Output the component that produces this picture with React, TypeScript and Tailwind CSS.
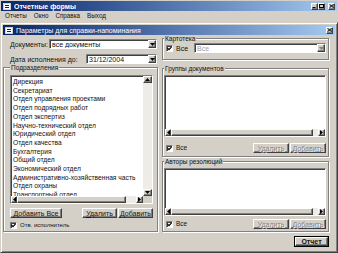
import React from "react";

const raised =
  "border border-t-white border-l-white border-b-[#404040] border-r-[#404040] shadow-[inset_-1px_-1px_0_#808080]";
const sunken =
  "border border-t-[#808080] border-l-[#808080] border-b-white border-r-white shadow-[inset_1px_1px_0_#404040]";
const etched = "border border-[#808080] shadow-[inset_1px_1px_0_#fff,1px_1px_0_#fff]";

const departments = [
  "Дирекция",
  "Секретариат",
  "Отдел управления проектами",
  "Отдел подрядных работ",
  "Отдел экспертиз",
  "Научно-технический отдел",
  "Юридический отдел",
  "Отдел качества",
  "Бухгалтерия",
  "Общий отдел",
  "Экономический отдел",
  "Административно-хозяйственная часть",
  "Отдел охраны",
  "Транспортный отдел",
];

type Dir = "up" | "down" | "left" | "right";

const Tri = ({ dir, color = "#000" }: { dir: Dir; color?: string }) => {
  const vertical = dir === "up" || dir === "down";
  const w = vertical ? 5 : 3;
  const h = vertical ? 3 : 5;
  const pts = {
    down: "0,0 5,0 2.5,3",
    up: "0,3 5,3 2.5,0",
    left: "3,0 3,5 0,2.5",
    right: "0,0 0,5 3,2.5",
  }[dir];
  return (
    <svg width={w} height={h} viewBox={`0 0 ${w} ${h}`}>
      <polygon points={pts} fill={color} />
    </svg>
  );
};

const ArrowBtn = ({ dir, className = "" }: { dir: Dir; className?: string }) => (
  <div className={`flex shrink-0 items-center justify-center bg-[#d4d0c8] ${raised} ${className}`}>
    <Tri dir={dir} />
  </div>
);

const Combo = ({ text, disabled, className = "" }: { text: string; disabled?: boolean; className?: string }) => (
  <div className={`flex h-[10px] items-center bg-white ${sunken} ${className}`}>
    <span className={`flex-1 truncate pl-[2px] ${disabled ? "text-[#a0a0a0]" : ""}`}>{text}</span>
    <div className={`flex h-full w-[8px] items-center justify-center bg-[#d4d0c8] ${raised}`}>
      <Tri dir="down" color={disabled ? "#808080" : "#000"} />
    </div>
  </div>
);

const Check = () => (
  <div className={`flex h-[7px] w-[7px] shrink-0 items-center justify-center bg-white ${sunken}`}>
    <svg width="5" height="5" viewBox="0 0 5 5">
      <path d="M0.6 2.2 L2 3.7 L4.6 0.8" stroke="#000" strokeWidth="1.2" fill="none" />
    </svg>
  </div>
);

const Btn = ({
  label,
  disabled,
  className = "",
}: {
  label: string;
  disabled?: boolean;
  className?: string;
}) => (
  <div
    className={`flex h-[10px] items-center justify-center bg-[#d4d0c8] ${raised} ${className} ${
      disabled ? "text-[#808080] [text-shadow:1px_1px_0_#fff]" : ""
    }`}
  >
    <span>
      <span className={disabled ? "" : "underline"}>{label[0]}</span>
      {label.slice(1)}
    </span>
  </div>
);

const HScroll = ({ thumbGap }: { thumbGap: number }) => (
  <div className="flex h-[7px] flex-1 bg-[#eeece8]">
    <ArrowBtn dir="left" className="w-[6px]" />
    <div className={`flex-1 bg-[#d4d0c8] ${raised}`} />
    <div style={{ width: thumbGap }} />
    <ArrowBtn dir="right" className="w-[7px]" />
  </div>
);

const WinIcon = () => (
  <svg width="8" height="7" viewBox="0 0 8 7" className="shrink-0">
    <rect x="0.5" y="0.5" width="7" height="6" fill="#fff" stroke="#d4d0c8" />
    <line x1="2" y1="2.5" x2="6" y2="2.5" stroke="#0a246a" />
    <line x1="2" y1="4.5" x2="6" y2="4.5" stroke="#0a246a" />
  </svg>
);

const CapBtn = ({ kind }: { kind: "min" | "max" | "close" }) => (
  <div className={`flex h-[7px] w-[7px] items-center justify-center bg-[#d4d0c8] ${raised}`}>
    <svg width="5" height="4" viewBox="0 0 5 4">
      {kind === "min" && <line x1="0.5" y1="3.5" x2="3.5" y2="3.5" stroke="#000" />}
      {kind === "max" && <rect x="0.5" y="0.5" width="4" height="3" fill="none" stroke="#000" />}
      {kind === "close" && (
        <path d="M0.5 0.3 L4.5 3.7 M4.5 0.3 L0.5 3.7" stroke="#000" strokeWidth="1" />
      )}
    </svg>
  </div>
);

const Legend = ({ text }: { text: string }) => (
  <legend className="bg-[#d4d0c8] px-[1px] text-[6.5px] leading-[7px]">{text}</legend>
);

export default function App() {
  return (
    <div className="flex h-[253px] w-[338px] flex-col overflow-hidden bg-[#d4d0c8] pt-[1px] font-['Liberation_Sans',Arial,sans-serif] text-[7px] leading-none text-[#111]">
      {/* main title bar */}
      <div className="mx-[1px] flex h-[10px] items-center gap-[3px] bg-gradient-to-r from-[#0a246a] to-[#a6caf0] px-[2px]">
        <WinIcon />
        <span className="flex-1 font-bold text-white">Отчетные формы</span>
        <div className="flex">
          <CapBtn kind="min" />
          <CapBtn kind="max" />
        </div>
        <CapBtn kind="close" />
      </div>

      {/* menu */}
      <div className="flex h-[11px] items-center gap-[7px] pl-[5px] text-[6.3px]">
        <span>Отчеты</span>
        <span>Окно</span>
        <span>Справка</span>
        <span>Выход</span>
      </div>

      {/* child window */}
      <div className="flex flex-1 flex-col border border-t-[#d4d0c8] border-l-[#d4d0c8] border-b-[#404040] border-r-[#404040] p-[2px] shadow-[inset_1px_1px_0_#fff,inset_-1px_-1px_0_#808080]">
        <div className="flex h-[10px] items-center gap-[3px] bg-gradient-to-r from-[#0a246a] to-[#a6caf0] px-[2px]">
          <WinIcon />
          <span className="flex-1 text-white">Параметры для справки-напоминания</span>
          <CapBtn kind="close" />
        </div>

        <div className="flex flex-1 gap-[4px]">
          {/* left column */}
          <div className="flex w-[155px] flex-col">
            <div className="mt-[4px] flex h-[10px] items-center">
              <span className="w-[46px] pl-[7px]">Документы:</span>
              <Combo text="все документы" className="w-[108px]" />
            </div>
            <div className="mt-[5px] flex h-[10px] items-center">
              <span className="w-[83px] pl-[7px]">Дата исполнения до:</span>
              <Combo text="31/12/2004" className="w-[71px]" />
            </div>

            <fieldset className={`${etched} pb-[2px] pl-[6px] pr-[4px]`}>
              <Legend text="Подразделения" />
              <div className={`mt-[4px] flex h-[129px] flex-col bg-white ${sunken}`}>
                <div className="flex min-h-0 flex-1">
                  <div className="flex-1 overflow-hidden pl-[2px] pt-[2px] text-[6.7px] leading-[8.7px]">
                    {departments.map((d) => (
                      <div key={d} className="whitespace-nowrap">
                        {d}
                      </div>
                    ))}
                  </div>
                  <div className="flex w-[9px] flex-col bg-[#eeece8]">
                    <ArrowBtn dir="up" className="h-[7px]" />
                    <div className="flex-1" />
                    <ArrowBtn dir="down" className="h-[7px]" />
                  </div>
                </div>
                <div className="flex">
                  <HScroll thumbGap={10} />
                  <div className="w-[9px] bg-[#d4d0c8]" />
                </div>
              </div>

              <div className="mt-[4px] flex gap-[1px]">
                <Btn label="Добавить Все" className="w-[52px]" />
                <div className="flex-1" />
                <Btn label="Удалить" className="w-[35px]" />
                <Btn label="Добавить" className="w-[35px]" />
              </div>

              <div className="mt-[3px] flex h-[8px] items-center gap-[3px]">
                <Check />
                <span className="text-[6px]">Отв. исполнитель</span>
              </div>
            </fieldset>
          </div>

          {/* right column */}
          <div className="flex w-[167px] flex-col">
            <fieldset className={`${etched} pb-[6px] pl-[1px] pr-[2px]`}>
              <Legend text="Картотека" />
              <div className="mt-[1px] flex h-[10px] items-center">
                <div className="ml-[2px]">
                  <Check />
                </div>
                <span className="ml-[3px]">Все</span>
                <Combo text="Все" disabled className="ml-auto w-[132px]" />
              </div>
            </fieldset>

            <fieldset className={`${etched} mt-[5px] pb-[3px] pl-[1px] pr-[2px]`}>
              <Legend text="Группы документов" />
              <div className={`mt-[3px] flex h-[62px] flex-col justify-end bg-white ${sunken}`}>
                <div className="flex">
                  <HScroll thumbGap={5} />
                </div>
              </div>
              <div className="mt-[6px] flex h-[10px] items-center">
                <div className="ml-[2px]">
                  <Check />
                </div>
                <span className="ml-[3px] flex-1 text-[6.5px]">Все</span>
                <Btn label="Удалить" disabled className="w-[36px]" />
                <Btn label="Добавить" disabled className="ml-[1px] w-[36px]" />
              </div>
            </fieldset>

            <fieldset className={`${etched} mt-[1px] pb-[2px] pl-[1px] pr-[2px]`}>
              <Legend text="Авторы резолюций" />
              <div className={`mt-[3px] flex h-[48px] flex-col justify-end bg-white ${sunken}`}>
                <div className="flex">
                  <HScroll thumbGap={5} />
                </div>
              </div>
              <div className="mt-[3px] flex h-[10px] items-center">
                <div className="ml-[2px]">
                  <Check />
                </div>
                <span className="ml-[3px] flex-1 text-[6.5px]">Все</span>
                <Btn label="Удалить" disabled className="w-[36px]" />
                <Btn label="Добавить" disabled className="ml-[1px] w-[36px]" />
              </div>
            </fieldset>

            <div className="mt-[4px] flex justify-end">
              <div className="border border-black">
                <div className={`flex h-[9px] w-[33px] items-center justify-center bg-[#d4d0c8] font-bold ${raised}`}>
                  Отчет
                </div>
              </div>
            </div>
          </div>
        </div>
      </div>
    </div>
  );
}
